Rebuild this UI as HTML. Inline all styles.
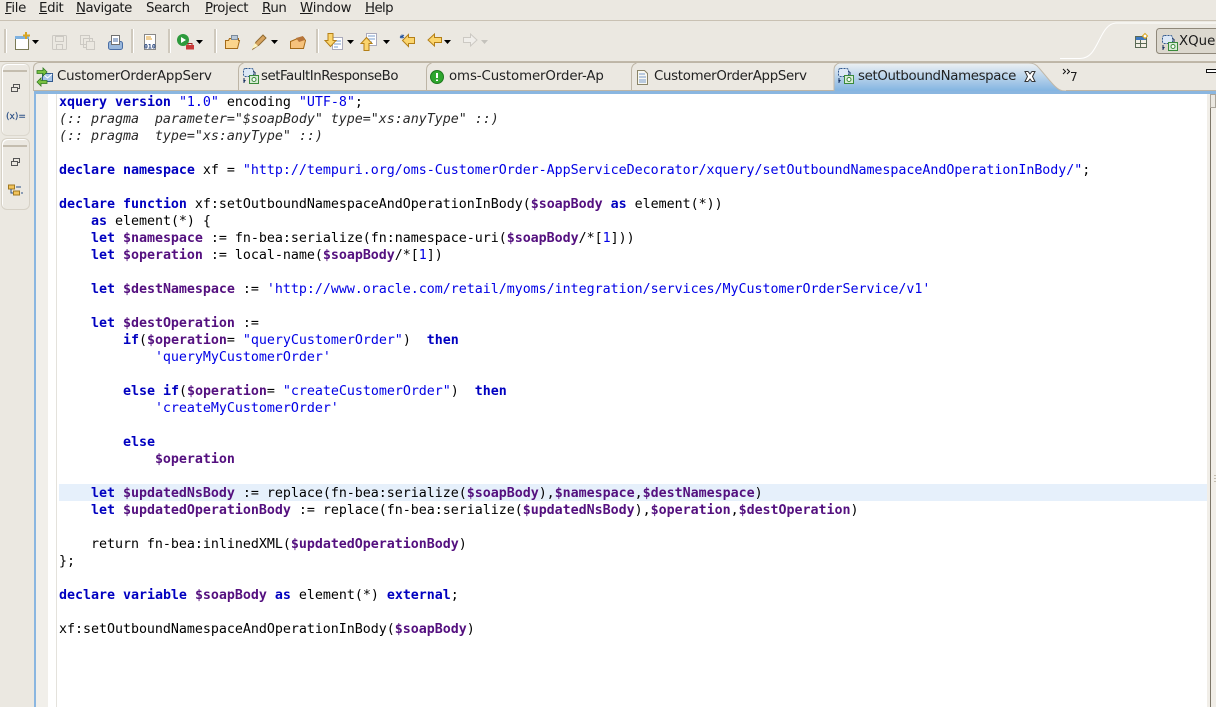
<!DOCTYPE html>
<html><head><meta charset="utf-8"><style>
html,body{margin:0;padding:0}
body{width:1216px;height:707px;position:relative;overflow:hidden;background:#ebe8e1;font-family:"DejaVu Sans",sans-serif;font-size:13.33px;color:#1a1a1a}
.a{position:absolute}
.m{position:absolute;top:0;line-height:18px;white-space:nowrap;letter-spacing:-.35px}
.m u{text-decoration:underline}
.t{position:absolute;top:68px;line-height:18px;white-space:nowrap;font-size:13.33px;color:#222}
.sep{position:absolute;top:29px;width:2px;height:24px;background:#cfc9bd;border-right:1px solid #fff}
.l{position:absolute;left:59px;height:17px;line-height:17px;font-family:"DejaVu Sans Mono",monospace;font-size:13.33px;letter-spacing:-.03px;white-space:pre;color:#000}
b{color:#0000c0;font-weight:bold}
i{font-style:italic;color:#2a2a2a}
s{text-decoration:none;color:#0000e6}
v{color:#54107f;font-weight:bold}
svg{position:absolute;overflow:visible}
</style></head><body>
<div class="m" style="left:5px"><u>F</u>ile</div>
<div class="m" style="left:39px"><u>E</u>dit</div>
<div class="m" style="left:76px;letter-spacing:-.5px"><u>N</u>avigate</div>
<div class="m" style="left:146px"><span>Search</span></div>
<div class="m" style="left:205px"><u>P</u>roject</div>
<div class="m" style="left:262px"><u>R</u>un</div>
<div class="m" style="left:300px;letter-spacing:-.2px"><u>W</u>indow</div>
<div class="m" style="left:365px;letter-spacing:-.6px"><u>H</u>elp</div>
<div class="a" style="left:0;top:20px;width:1216px;height:1px;background:#c9c1b3"></div>
<div class="sep" style="left:4px"></div><div class="sep" style="left:131px"></div><div class="sep" style="left:168px"></div><div class="sep" style="left:214px"></div><div class="sep" style="left:316px"></div>
<svg width="1216" height="62" style="left:0;top:0">
<rect x="15.500" y="36.500" width="13" height="13" fill="#fff" stroke="#7a7a55"/><rect x="15" y="36" width="14" height="3" fill="#7fb2e0"/><path d="M26 32v7M23 35.500h7" stroke="#d9a520" stroke-width="2"/>
<path d="M32 40h7l-3.500 4z" fill="#000"/>
<g fill="none" stroke="#ccc9c3"><rect x="52.500" y="35.500" width="14" height="14" rx="1"/><rect x="55.500" y="36.500" width="8" height="5"/><rect x="56.500" y="44.500" width="6" height="5"/></g>
<g fill="none" stroke="#ccc9c3"><rect x="80.500" y="35.500" width="9" height="9"/><rect x="83.500" y="38.500" width="9" height="9"/><rect x="86.500" y="41.500" width="8" height="8" fill="#ebe8e1"/></g>
<rect x="108.500" y="41.500" width="14" height="8" rx="2" fill="#9ab8dc" stroke="#4a6ea5"/><rect x="111.500" y="35.500" width="8" height="9" fill="#fff" stroke="#707070"/><path d="M113 39h5M113 41h5" stroke="#4a6ea5"/>
<rect x="144.500" y="34.500" width="11" height="15" fill="#fff" stroke="#888"/><path d="M146 37h5M146 39h6" stroke="#e0a030"/><text x="144" y="48.500" font-family="DejaVu Sans Mono,monospace" font-size="6.500" font-weight="bold" fill="#1c3c78">010</text>
<circle cx="183" cy="40" r="6" fill="#2d9a3c"/><path d="M181 37l5 3-5 3z" fill="#fff"/><rect x="186" y="45" width="8" height="4.500" fill="#c93a3a"/><path d="M188 45v-1.500h4V45" stroke="#a02020" fill="none"/>
<path d="M196 40h7l-3.500 4z" fill="#000"/>
<path d="M225.500 48.500v-8h3l1-2h9v2h1l-2 8z" fill="#fbd48c" stroke="#a56a17"/><rect x="231.500" y="35.500" width="6" height="4" fill="#b9c8d8" stroke="#7b8a9a"/>
<path d="M253 49l3-7 7-7 3 3-7 7z" fill="#d8a560" stroke="#8f6a30"/><path d="M252 49l3-6 3 3z" fill="#fff6c0"/>
<path d="M271 40h7l-3.500 4z" fill="#000"/>
<path d="M290.500 48.500v-7l7-3 6-1 2 3-2 8z" fill="#f6c27c" stroke="#a56a17"/><path d="M296 38l7-2 2 4-6 2z" fill="#b7753a"/>
<rect x="332.500" y="37.500" width="10" height="12" fill="#fff" stroke="#aab"/><path d="M334 41h7M334 44h7M334 47h4" stroke="#7a9ccc"/><path d="M328 33.500h5v7h3l-5.500 6-5.500-6h3z" fill="#fbd56e" stroke="#b47f17"/>
<path d="M347 40h7l-3.500 4z" fill="#000"/>
<rect x="366.500" y="33.500" width="10" height="12" fill="#fff" stroke="#aab"/><path d="M368 36h7M368 39h7M368 42h4" stroke="#7a9ccc"/><path d="M364 50.500h5v-7h3l-5.500-6-5.500 6h3z" fill="#fbd56e" stroke="#b47f17"/>
<path d="M383 40h7l-3.500 4z" fill="#000"/>
<path d="M414.500 37.500h-6v-3l-6 6 6 6v-3h6z" fill="#fbd56e" stroke="#b47f17"/><path d="M400 36l4 1.500M402 34.500v4M404 35l-4 3" stroke="#1f4f9a"/>
<path d="M441.500 37.500h-7v-3.500l-6.500 6 6.500 6v-3.500h7z" fill="#fbd56e" stroke="#b47f17"/>
<path d="M444 40h7l-3.500 4z" fill="#000"/>
<path d="M463.500 37.500h7v-3.500l6.500 6-6.500 6v-3.500h-7z" fill="#f0eeea" stroke="#ccc9c3"/>
<path d="M481 40h7l-3.500 4z" fill="#c4c2bc"/>
<path d="M1060 58.500h20c10 0 14-8 19-18 5-10 9-17 17-17.500h100" fill="none" stroke="#fff" stroke-width="1"/>
<path d="M0 61.500H1216" stroke="#c0b8a9"/>
<rect x="1135.500" y="36.500" width="11" height="11" fill="#f2efe5" stroke="#5a6a55"/><rect x="1136" y="37" width="10" height="3" fill="#3d78c0"/><path d="M1140.500 40v7M1136 43.500h10" stroke="#5a6a55"/><path d="M1145 33.500l2.500 2.500-2.500 2.500-2.500-2.500z" fill="#fff" stroke="#d9a520"/>
<rect x="1156.500" y="28.500" width="70" height="25" rx="3" fill="#dcd8ce" stroke="#8f887a"/>
<g transform="translate(1162,35)"><rect x=".5" y=".5" width="10" height="8" rx="2" fill="#dce8f6" stroke="#31598f" stroke-dasharray="2 1"/><path d="M12 4v6M1 10v5" stroke="#16305f"/><path d="M10.500 2.500l2 2-2 0zM0 12h3l-1.500 2z" fill="#16305f"/><rect x="6.500" y="7.500" width="9" height="8" fill="#d7ecd5" stroke="#3a8a3a"/><circle cx="11" cy="11.500" r="2" fill="#fff" stroke="#3a8a3a"/></g>
</svg>
<div class="a" style="left:1179px;top:33px;line-height:18px;font-size:13.33px">XQue</div>

<!-- tabs -->
<div class="a" style="left:33px;top:62px;width:1183px;height:29px;background:#ebe8e1;border-radius:6px 0 0 0;box-sizing:border-box;border-top:1px solid #bdb5a6;border-left:1px solid #bdb5a6"></div>
<svg width="1216" height="30" style="left:0;top:62px">
<path d="M238.500 29V8c0-4 2-6 5-7M426.500 29V8c0-4 2-6 5-7M631.500 29V8c0-4 2-6 5-7" fill="none" stroke="#bdb5a6"/>
<path d="M34 28.500H834M1066 28.500H1216" stroke="#bdb5a6"/>
<defs><linearGradient id="g" x1="0" y1="0" x2="0" y2="1"><stop offset="0" stop-color="#eef1f3"/><stop offset="1" stop-color="#7fb2e1"/></linearGradient></defs>
<path d="M834 30V8c0-4 2-6 5-7h190c4 0 7 1 10 5 8 9 15 19 21 22 2 1 4 1 6 1v1z" fill="url(#g)" stroke="#c0b8a9" stroke-width="1"/>
<g id="mail"><rect x="42.500" y="11.500" width="10" height="8" fill="#a8c6ea" stroke="#31598f"/><path d="M43 12l4.500 4 4.500-4" fill="none" stroke="#fff"/>
<path d="M37 8.500h6V6l4 4-4 4v-2.500h-6z" fill="#7ac142" stroke="#2e7a1e" stroke-width=".8"/><path d="M47 18.500h-6V16l-4 4 4 4v-2.500h6z" fill="#7ac142" stroke="#2e7a1e" stroke-width=".8"/></g>
<g transform="translate(243,6)"><rect x=".5" y=".5" width="10" height="8" rx="2" fill="#dce8f6" stroke="#31598f" stroke-dasharray="2 1"/><path d="M12 4v6M1 10v5" stroke="#16305f"/><path d="M10.500 2.500l2 2-2 0zM0 12h3l-1.500 2z" fill="#16305f"/><rect x="6.500" y="7.500" width="9" height="8" fill="#d7ecd5" stroke="#3a8a3a"/><circle cx="11" cy="11.500" r="2" fill="#fff" stroke="#3a8a3a"/></g>
<circle cx="437" cy="15" r="6.500" fill="#2ea62e" stroke="#1d7a1d"/><path d="M437 11v5M437 17.500v1.500" stroke="#fff" stroke-width="2"/>
<path d="M637.500 8.500h7l3 3v11h-10z" fill="#f8f8f2" stroke="#8a8468"/><path d="M639 12h6M639 15h7M639 18h7M639 20h7" stroke="#7a9ccc"/>
<g transform="translate(838,6)"><rect x=".5" y=".5" width="10" height="8" rx="2" fill="#dce8f6" stroke="#31598f" stroke-dasharray="2 1"/><path d="M12 4v6M1 10v5" stroke="#16305f"/><path d="M10.500 2.500l2 2-2 0zM0 12h3l-1.500 2z" fill="#16305f"/><rect x="6.500" y="7.500" width="9" height="8" fill="#d7ecd5" stroke="#3a8a3a"/><circle cx="11" cy="11.500" r="2" fill="#fff" stroke="#3a8a3a"/></g>
<path d="M1025 9.500h3l2 2.500 2-2.500h3l-2.500 5 2.500 5h-3l-2-2.500-2 2.500h-3l2.500-5z" fill="#fff" stroke="#333"/>
<path d="M1063 7l2.500 2.500-2.500 2.500M1067 7l2.500 2.500-2.500 2.500" fill="none" stroke="#111"/>
<rect x="1206.500" y="7.500" width="10" height="3" fill="#fff" stroke="#111"/>
</svg>
<div class="t" style="left:57px;letter-spacing:-.2px">CustomerOrderAppServ</div>
<div class="t" style="left:261px;letter-spacing:-.45px">setFaultInResponseBo</div>
<div class="t" style="left:449px;letter-spacing:-.1px">oms-CustomerOrder-Ap</div>
<div class="t" style="left:654px;letter-spacing:-.3px">CustomerOrderAppServ</div>
<div class="t" style="left:858px;letter-spacing:-.35px">setOutboundNamespace</div>
<div class="a" style="left:1070px;top:68px;font-size:12px;line-height:18px">7</div>

<!-- side trim -->
<div class="a" style="left:1px;top:63px;width:29px;height:73px;box-sizing:border-box;background:#ebe8e1;border:1px solid #dcd8ce;border-radius:6px;box-shadow:inset 1px 1px 0 #fff"></div>
<div class="a" style="left:1px;top:138px;width:29px;height:72px;box-sizing:border-box;background:#ebe8e1;border:1px solid #d6d1c6;border-radius:6px;box-shadow:inset 1px 1px 0 #fff"></div>
<div class="a" style="left:3px;top:70px;width:24px;height:2px;background:#c4bdaf"></div>
<div class="a" style="left:3px;top:145px;width:24px;height:2px;background:#c4bdaf"></div>
<svg width="30" height="220" style="left:0;top:0">
<g fill="none" stroke="#555"><rect x="13.500" y="84.500" width="6" height="4"/><rect x="11.500" y="87.500" width="6" height="4" fill="#ebe8e1"/><rect x="13.500" y="158.500" width="6" height="4"/><rect x="11.500" y="161.500" width="6" height="4" fill="#ebe8e1"/></g>
<text x="6" y="119" font-family="DejaVu Sans,sans-serif" font-size="9" fill="#2a4f86" stroke="#2a4f86" stroke-width=".2">(x)=</text>
<rect x="8.500" y="185" width="6" height="4" fill="#f2c45c" stroke="#a07820"/><rect x="13.500" y="191" width="6" height="4" fill="#f2c45c" stroke="#a07820"/><path d="M11 189v4h2M16 187h5M21 193h2" stroke="#2a4f86" fill="none"/>
</svg>

<!-- editor -->
<div class="a" style="left:34px;top:91px;width:1182px;height:3px;background:#8ab6e0"></div>
<div class="a" style="left:34px;top:91px;width:2px;height:616px;background:#8ab6e0"></div>
<div class="a" style="left:36px;top:94px;width:1172px;height:613px;background:#fff"></div>
<div class="a" style="left:36px;top:94px;width:12px;height:613px;background:#f1efea"></div>
<div class="a" style="left:48px;top:94px;width:9px;height:613px;background:#fff;border-right:1px solid #e4e2dc;box-sizing:border-box"></div>
<div class="a" style="left:59px;top:484px;width:1148px;height:17px;background:#e6f0fb"></div>
<div class="a" style="left:1207px;top:94px;width:3px;height:613px;background:#f1eee8"></div>
<div class="a" style="left:1210px;top:94px;width:1px;height:613px;background:#7d7668"></div>
<div class="a" style="left:1211px;top:94px;width:5px;height:613px;background:#f1eee8"></div>
<div class="a" style="left:1210px;top:94px;width:6px;height:14px;background:#ebe8e1;border:1px solid #aaa49a;box-sizing:border-box"></div>
<div class="a" style="left:1214px;top:475px;width:2px;height:1px;background:#c4bdaf"></div>
<div class="a" style="left:1214px;top:478px;width:2px;height:1px;background:#c4bdaf"></div>
<div class="a" style="left:1214px;top:481px;width:2px;height:1px;background:#c4bdaf"></div>

<div class="l" style="top:94px"><b>xquery</b> <b>version</b> <s>"1.0"</s> encoding <s>"UTF-8"</s>;</div>
<div class="l" style="top:111px"><i>(:: pragma  parameter="$soapBody" type="xs:anyType" ::)</i></div>
<div class="l" style="top:128px"><i>(:: pragma  type="xs:anyType" ::)</i></div>
<div class="l" style="top:162px"><b>declare</b> <b>namespace</b> xf = <s>"http://tempuri.org/oms-CustomerOrder-AppServiceDecorator/xquery/setOutboundNamespaceAndOperationInBody/"</s>;</div>
<div class="l" style="top:196px"><b>declare</b> <b>function</b> xf:setOutboundNamespaceAndOperationInBody(<v>$soapBody</v> <b>as</b> element(*))</div>
<div class="l" style="top:213px">    <b>as</b> element(*) {</div>
<div class="l" style="top:230px">    <b>let</b> <v>$namespace</v> := fn-bea:serialize(fn:namespace-uri(<v>$soapBody</v>/*[<s>1</s>]))</div>
<div class="l" style="top:247px">    <b>let</b> <v>$operation</v> := local-name(<v>$soapBody</v>/*[<s>1</s>])</div>
<div class="l" style="top:281px">    <b>let</b> <v>$destNamespace</v> := <s>'http://www.oracle.com/retail/myoms/integration/services/MyCustomerOrderService/v1'</s></div>
<div class="l" style="top:315px">    <b>let</b> <v>$destOperation</v> :=</div>
<div class="l" style="top:332px">        <b>if</b>(<v>$operation</v>= <s>"queryCustomerOrder"</s>)  <b>then</b></div>
<div class="l" style="top:349px">            <s>'queryMyCustomerOrder'</s></div>
<div class="l" style="top:383px">        <b>else</b> <b>if</b>(<v>$operation</v>= <s>"createCustomerOrder"</s>)  <b>then</b></div>
<div class="l" style="top:400px">            <s>'createMyCustomerOrder'</s></div>
<div class="l" style="top:434px">        <b>else</b></div>
<div class="l" style="top:451px">            <v>$operation</v></div>
<div class="l" style="top:485px">    <b>let</b> <v>$updatedNsBody</v> := replace(fn-bea:serialize(<v>$soapBody</v>),<v>$namespace</v>,<v>$destNamespace</v>)</div>
<div class="l" style="top:502px">    <b>let</b> <v>$updatedOperationBody</v> := replace(fn-bea:serialize(<v>$updatedNsBody</v>),<v>$operation</v>,<v>$destOperation</v>)</div>
<div class="l" style="top:536px">    return fn-bea:inlinedXML(<v>$updatedOperationBody</v>)</div>
<div class="l" style="top:553px">};</div>
<div class="l" style="top:587px"><b>declare</b> <b>variable</b> <v>$soapBody</v> <b>as</b> element(*) <b>external</b>;</div>
<div class="l" style="top:621px">xf:setOutboundNamespaceAndOperationInBody(<v>$soapBody</v>)</div>
</body></html>
